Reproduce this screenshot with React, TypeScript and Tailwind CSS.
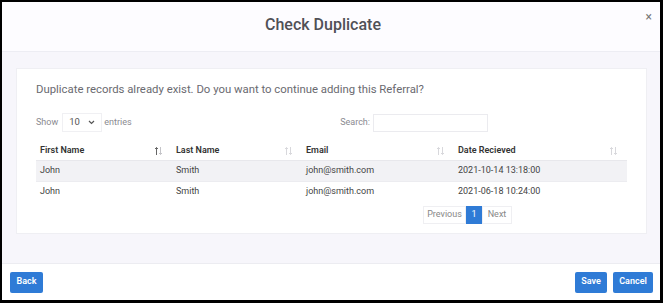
import React from 'react';

const rows = [
  { first: 'John', last: 'Smith', email: 'john@smith.com', date: '2021-10-14 13:18:00' },
  { first: 'John', last: 'Smith', email: 'john@smith.com', date: '2021-06-18 10:24:00' },
];

const SortIcon: React.FC<{ active?: boolean }> = ({ active }) => (
  <svg width="9" height="10" viewBox="0 0 9 10" className="flex-shrink-0">
    {/* up arrow */}
    <path d="M2.5 9V1.5M1 3L2.5 1.5L4 3" stroke={active ? '#666' : '#d8d8dc'} strokeWidth="1" fill="none" />
    {/* down arrow */}
    <path d="M6.5 1V8.5M5 7L6.5 8.5L8 7" stroke={active ? '#c4c4c8' : '#d8d8dc'} strokeWidth="1" fill="none" />
  </svg>
);

const columns = [
  { label: 'First Name', w: 'w-[136px]', active: true },
  { label: 'Last Name', w: 'w-[130px]' },
  { label: 'Email', w: 'w-[152px]' },
  { label: 'Date Recieved', w: 'flex-1' },
];

export default function App() {
  return (
    <div
      className="w-[663px] h-[303px] bg-black pl-[2px] pt-[2px] pr-[3px] pb-[3px]"
      style={{ fontFamily: 'Roboto, "Noto Sans", sans-serif' }}
    >
      <div className="w-full h-full flex flex-col">
        {/* Header */}
        <div className="h-[50px] bg-[#fdfcff] border-b border-[#ededf3] flex items-center pl-[8px] pr-[8px]">
          <div className="flex-1 text-center text-[16px] font-medium text-[#505056] mb-[3px]">
            Check Duplicate
          </div>
          <div className="w-[16px] self-start mt-[9px] text-right text-[12px] text-[#777] leading-none">×</div>
        </div>

        {/* Body */}
        <div className="h-[212px] bg-[#f7f6fb] border-b border-[#ececf1] pl-[14px] pr-[13px] pt-[16px]">
          <div className="h-[166px] bg-white border border-[#efeff3] px-[19px] pt-[12px]">
            <p className="text-[11.35px] text-[#6a6a70] leading-[16px]">
              Duplicate records already exist. Do you want to continue adding this Referral?
            </p>

            {/* Show / Search */}
            <div className="w-[452px] mt-[16px] flex items-center justify-between text-[9px] text-[#8a8a90]">
              <div className="flex items-center">
                <span>Show</span>
                <div className="ml-[4px] w-[40px] h-[19px] border border-[#f0f0f3] flex items-center justify-between px-[6px] text-[#555]">
                  <span className="text-[9.5px]">10</span>
                  <svg width="7" height="5" viewBox="0 0 7 5"><path d="M1 1L3.5 3.5L6 1" stroke="#555" strokeWidth="1.2" fill="none" /></svg>
                </div>
                <span className="ml-[2px]">entries</span>
              </div>
              <div className="flex items-center">
                <span>Search:</span>
                <div className="ml-[3px] w-[115px] h-[18px] border border-[#ebebef] bg-white" />
              </div>
            </div>

            {/* Table */}
            <div className="mt-[9px] w-[591px]">
              <div className="flex h-[19px] items-center text-[9px] font-semibold text-[#333]">
                {columns.map(c => (
                  <div key={c.label} className={`${c.w} flex items-center justify-between pl-[4px] pr-[9px]`}>
                    <span>{c.label}</span>
                    <SortIcon active={c.active} />
                  </div>
                ))}
              </div>
              {rows.map((r, i) => (
                <div
                  key={i}
                  className={`flex h-[21px] items-center text-[9px] text-[#444] ${i === 0 ? 'bg-[#f2f2f5] border-t border-[#e8e8ec]' : 'border-t border-[#ececf0]'}`}
                >
                  <div className="w-[136px] pl-[4px]">{r.first}</div>
                  <div className="w-[130px] pl-[4px]">{r.last}</div>
                  <div className="w-[152px] pl-[4px]">{r.email}</div>
                  <div className="flex-1 pl-[4px]">{r.date}</div>
                </div>
              ))}
            </div>

            {/* Pagination */}
            <div className="mt-[4px] flex ml-[387px] h-[18px] text-[9px]">
              <div className="w-[43px] border border-[#efeff2] flex items-center justify-center text-[#888]">Previous</div>
              <div className="w-[16px] bg-[#2f7bd6] flex items-center justify-center text-white">1</div>
              <div className="w-[30px] border border-[#efeff2] flex items-center justify-center text-[#888]">Next</div>
            </div>
          </div>
        </div>

        {/* Footer */}
        <div className="flex-1 bg-white flex items-center justify-between pl-[8px] pr-[7px]">
          <button className="h-[21px] w-[33px] bg-[#2f7bd6] rounded-[2px] text-white text-[9px] font-semibold">Back</button>
          <div className="flex gap-[6px]">
            <button className="h-[21px] w-[32px] bg-[#2f7bd6] rounded-[2px] text-white text-[9px] font-semibold">Save</button>
            <button className="h-[21px] w-[40px] bg-[#2f7bd6] rounded-[2px] text-white text-[9px] font-semibold">Cancel</button>
          </div>
        </div>
      </div>
    </div>
  );
}
